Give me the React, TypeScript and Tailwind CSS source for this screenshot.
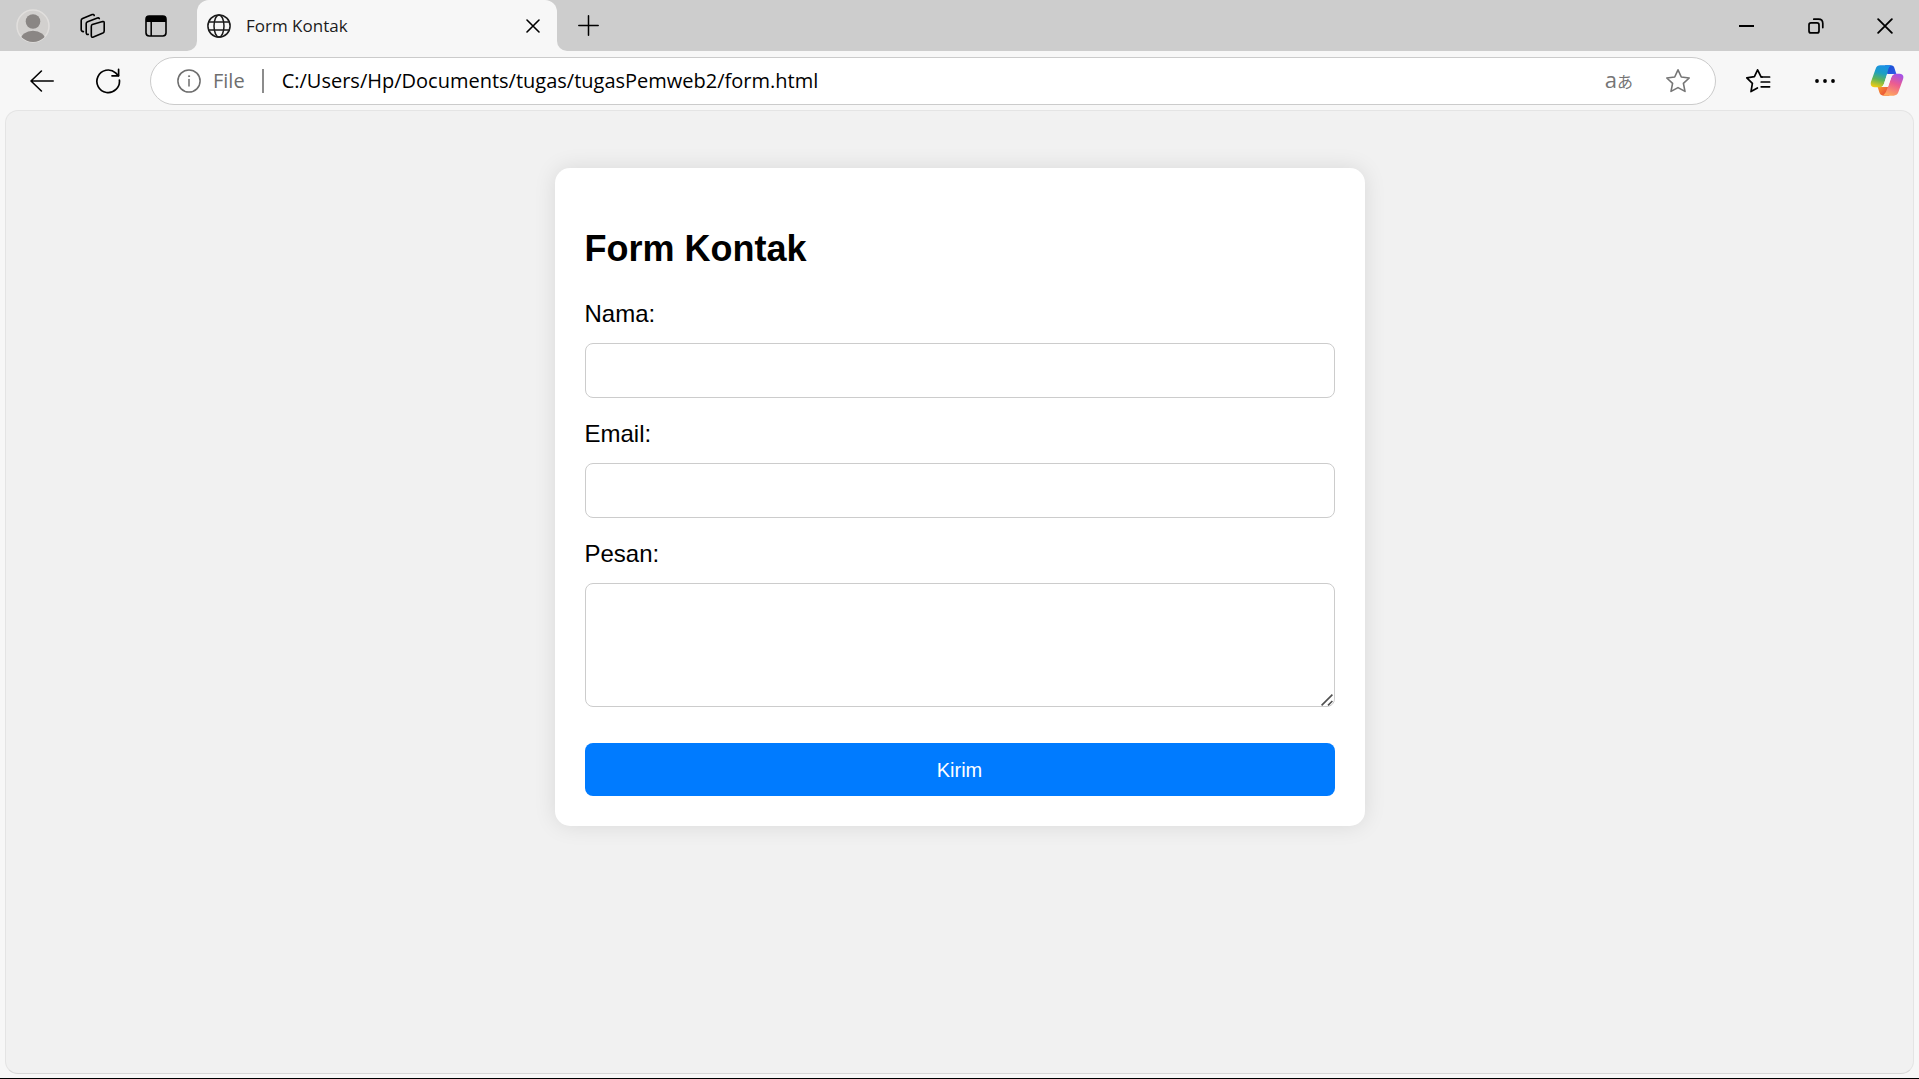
import React from "react";

const ui = "font-['Open_Sans','Noto_Sans',sans-serif]";

const line = {
  fill: "none",
  stroke: "currentColor",
  strokeLinecap: "round" as const,
  strokeLinejoin: "round" as const,
};

function Avatar() {
  return (
    <svg width="34" height="34" viewBox="0 0 34 34" aria-hidden="true">
      <defs>
        <clipPath id="avatar-clip">
          <circle cx="17" cy="17" r="16" />
        </clipPath>
      </defs>
      <circle cx="17" cy="17" r="16" fill="#d2d0ce" stroke="#e1dfdd" strokeWidth="1.5" />
      <g clipPath="url(#avatar-clip)" fill="#8a8684">
        <circle cx="17" cy="12.5" r="7.3" />
        <ellipse cx="17" cy="31.5" rx="12.5" ry="9.8" />
      </g>
    </svg>
  );
}

function WorkspacesIcon() {
  return (
    <svg width="26" height="26" viewBox="0 0 26 26" strokeWidth="1.6" {...line} aria-hidden="true">
      <path d="M12.3 11.6 L22.6 8.6 Q24.2 8.2 24.2 9.8 V18 Q24.2 19.4 22.9 20 L13.4 24 Q11.3 24.7 11.3 22.6 V13.4 Q11.3 12 12.3 11.6 Z" />
      <path d="M8.2 21.4 Q6.2 21.8 6.2 19.6 V10.6 Q6.2 9.2 7.6 8.7 L17.4 5 Q18.8 4.6 19.3 5.6" />
      <path d="M3.4 18.6 Q1.2 18.4 1.2 16.4 V7.6 Q1.2 6.2 2.6 5.6 L12.2 1.6 Q13.8 1.1 14.2 2.4" />
    </svg>
  );
}

function TabActionsIcon() {
  return (
    <svg width="22" height="22" viewBox="0 0 22 22" aria-hidden="true">
      <rect x="1" y="1" width="20" height="20" rx="3.2" fill="none" stroke="#000" strokeWidth="1.6" />
      <path d="M1 7 V4 Q1 1 4 1 H18 Q21 1 21 4 V7 Z" fill="#000" />
      <path d="M6.2 7 V21" stroke="#000" strokeWidth="1.5" />
    </svg>
  );
}

function GlobeIcon() {
  return (
    <svg width="24" height="24" viewBox="0 0 24 24" strokeWidth="1.5" {...line} aria-hidden="true">
      <circle cx="12" cy="12" r="11.1" />
      <ellipse cx="12" cy="12" rx="5" ry="11.1" />
      <path d="M2 8 H22 M2 16 H22" />
    </svg>
  );
}

function CrossIcon({ size }: { size: number }) {
  return (
    <svg width={size} height={size} viewBox="0 0 14 14" strokeWidth="1.6" {...line} aria-hidden="true">
      <path d="M1 1 L13 13 M13 1 L1 13" />
    </svg>
  );
}

function PlusIcon() {
  return (
    <svg width="21" height="21" viewBox="0 0 21 21" strokeWidth="1.5" {...line} aria-hidden="true">
      <path d="M10.5 0.8 V20.2 M0.8 10.5 H20.2" />
    </svg>
  );
}

function RestoreIcon() {
  return (
    <svg width="16" height="16" viewBox="0 0 16 16" strokeWidth="1.7" {...line} aria-hidden="true">
      <rect x="1" y="4.9" width="10" height="10" rx="2" />
      <path d="M5.8 1.2 H10.5 Q14.8 1.2 14.8 5.5 V9.6" />
    </svg>
  );
}

function BackIcon() {
  return (
    <svg width="24" height="22" viewBox="0 0 24 22" strokeWidth="1.6" {...line} aria-hidden="true">
      <path d="M23.2 11 H1 M11.4 1 L1 11 L11.4 21" />
    </svg>
  );
}

function RefreshIcon() {
  return (
    <svg width="26" height="26" viewBox="0 0 26 26" strokeWidth="1.7" {...line} aria-hidden="true">
      <path d="M24.4 12 A11.3 11.3 0 1 1 20.6 4.8 L23.4 7.6" />
      <path d="M23.6 1.4 V7.8 H17" />
    </svg>
  );
}

function InfoIcon() {
  return (
    <svg width="24" height="24" viewBox="0 0 24 24" strokeWidth="1.5" {...line} aria-hidden="true">
      <circle cx="12" cy="12" r="11.1" />
      <path d="M12 10.5 V17" />
      <circle cx="12" cy="7.2" r="0.6" fill="currentColor" strokeWidth="0.8" />
    </svg>
  );
}

function StarIcon() {
  return (
    <svg width="26" height="26" viewBox="0 0 26 26" strokeWidth="1.6" {...line} aria-hidden="true">
      <path d="M13 1.8 L16.3 9 L24.2 10 L18.4 15.4 L20 23.4 L13 19.6 L6 23.4 L7.6 15.4 L1.8 10 L9.7 9 Z" />
    </svg>
  );
}

function FavoritesIcon() {
  return (
    <svg width="26" height="26" viewBox="0 0 26 26" strokeWidth="1.7" {...line} aria-hidden="true">
      <path d="M17 9 L15.8 8.4 L12.6 1.8 L9.4 8.6 L1.8 9.8 L7.4 15.4 L6 23.6 L12.4 20" />
      <path d="M16.2 9 H24.6 M16.2 14 H24.6 M16.2 18.8 H24.6" />
    </svg>
  );
}

function DotsIcon() {
  return (
    <svg width="22" height="6" viewBox="0 0 22 6" aria-hidden="true">
      <circle cx="3" cy="3" r="1.9" />
      <circle cx="11" cy="3" r="1.9" />
      <circle cx="19" cy="3" r="1.9" />
    </svg>
  );
}

function CopilotIcon() {
  return (
    <svg width="34" height="31" viewBox="0 0 102 93" aria-hidden="true">
      <defs>
        <linearGradient id="cp-left" x1="40" y1="0" x2="22" y2="68" gradientUnits="userSpaceOnUse">
          <stop offset="0" stopColor="#1a90e8" />
          <stop offset="0.35" stopColor="#1c9fc4" />
          <stop offset="0.65" stopColor="#5fb458" />
          <stop offset="1" stopColor="#f5cc10" />
        </linearGradient>
        <linearGradient id="cp-top" x1="50" y1="0" x2="76" y2="26" gradientUnits="userSpaceOnUse">
          <stop offset="0" stopColor="#1b4bd0" />
          <stop offset="1" stopColor="#2a5be6" />
        </linearGradient>
        <linearGradient id="cp-right" x1="84" y1="26" x2="58" y2="92" gradientUnits="userSpaceOnUse">
          <stop offset="0" stopColor="#a352e8" />
          <stop offset="0.45" stopColor="#ec5c90" />
          <stop offset="1" stopColor="#ffa95c" />
        </linearGradient>
        <linearGradient id="cp-bottom" x1="22" y1="66" x2="50" y2="90" gradientUnits="userSpaceOnUse">
          <stop offset="0" stopColor="#f99a2e" />
          <stop offset="1" stopColor="#e8483c" />
        </linearGradient>
      </defs>
      <path d="M45 1 H62 Q71 1 74 11 L79 27 H52 Z" fill="url(#cp-top)" />
      <path d="M58 92 H40 Q31 92 28 82 L23 66 H54 Z" fill="url(#cp-bottom)" />
      <path d="M65 1 H31 Q21 1 17 11 L3 50 Q-1 66 14 67 H28 Q38 67 42 56 L53 20 Q56 4 65 1 Z" fill="url(#cp-left)" />
      <path d="M37 92 H71 Q81 92 85 82 L99 43 Q104 27 88 26 H78 Q68 26 64 37 L51 73 Q46 88 37 92 Z" fill="url(#cp-right)" />
      <path d="M52 27 H72 Q66 30 64 37 L54 66 H34 Q40 63 42 56 Z" fill="#f7f7f7" />
    </svg>
  );
}

function TabStrip() {
  return (
    <header className="flex h-[51px] shrink-0 bg-[#f7f7f7]">
      <div className="flex items-center rounded-br-[10px] bg-[#cdcdcd] pr-[30px] pl-4">
        <button aria-label="Profile" className="mr-[30px]"><Avatar /></button>
        <button aria-label="Workspaces" className="mr-[39px]"><WorkspacesIcon /></button>
        <button aria-label="Tab actions"><TabActionsIcon /></button>
      </div>
      <div className="w-[360px] bg-[linear-gradient(#cdcdcd_50%,#f7f7f7_50%)]">
        <div className="flex h-full items-center rounded-t-[12px] bg-[#f7f7f7] pr-[17px] pl-[10px] text-[#1b1b1b]">
          <GlobeIcon />
          <span className={`ml-[15px] flex-1 text-[17px] leading-6 ${ui}`}>Form Kontak</span>
          <button aria-label="Close tab" className="text-black"><CrossIcon size={14} /></button>
        </div>
      </div>
      <div className="flex flex-1 items-center rounded-bl-[10px] bg-[#cdcdcd]">
        <button aria-label="New tab" className="ml-[21px]"><PlusIcon /></button>
        <div className="ml-auto flex h-full">
          <button aria-label="Minimize" className="flex w-[69px] items-center justify-center">
            <span className="h-[2px] w-[15px] bg-black" />
          </button>
          <button aria-label="Restore" className="flex w-[69px] items-center justify-center"><RestoreIcon /></button>
          <button aria-label="Close window" className="flex w-[69px] items-center justify-center"><CrossIcon size={16} /></button>
        </div>
      </div>
    </header>
  );
}

function Toolbar() {
  return (
    <nav className="flex h-[59px] shrink-0 items-center bg-[#f7f7f7] pr-[15px] pl-[30px]">
      <button aria-label="Back"><BackIcon /></button>
      <button aria-label="Refresh" className="ml-[41px]"><RefreshIcon /></button>
      <div className={`ml-[29px] flex h-12 flex-1 items-center rounded-full border border-[#cbcbcb] bg-white pr-[24px] pl-[26px] text-[20px] ${ui}`}>
        <button className="flex items-center gap-3 text-[#6e6e6e]">
          <InfoIcon />
          <span>File</span>
        </button>
        <span className="ml-[17px] h-6 w-[2px] bg-[#8c8c8c]" />
        <input
          aria-label="Address"
          defaultValue="C:/Users/Hp/Documents/tugas/tugasPemweb2/form.html"
          className="ml-[18px] min-w-0 flex-1 bg-transparent text-black outline-none"
        />
        <button aria-label="Translate" className="flex items-baseline font-['Open_Sans','Noto_Sans_CJK_JP',sans-serif] leading-6 text-[#757575]">
          <span className="text-[22px]">a</span>
          <span className="text-[16px]">あ</span>
        </button>
        <button aria-label="Add to favorites" className="ml-[32px] text-[#757575]"><StarIcon /></button>
      </div>
      <button aria-label="Favorites" className="ml-[29px]"><FavoritesIcon /></button>
      <button aria-label="Settings and more" className="ml-[43px]"><DotsIcon /></button>
      <button aria-label="Copilot" className="ml-[34px]"><CopilotIcon /></button>
    </nav>
  );
}

const field = "block w-full rounded-[8px] border border-[#cccccc] bg-white px-4 text-[20px] outline-none";
const label = "mb-[15px] block text-[24px] leading-7";

function ContactForm() {
  return (
    <form
      onSubmit={(e) => e.preventDefault()}
      className="mx-auto mt-[57px] w-full max-w-[810px] rounded-[15px] bg-white px-[30px] pt-[60px] pb-[30px] font-['Liberation_Sans',Arial,sans-serif] text-black shadow-[0_0_22px_rgba(0,0,0,0.1)]"
    >
      <h2 className="mb-[31px] text-[36px] leading-[41px] font-bold">Form Kontak</h2>
      <div className="mb-[22px]">
        <label htmlFor="nama" className={label}>Nama:</label>
        <input id="nama" type="text" className={`h-[55px] ${field}`} />
      </div>
      <div className="mb-[22px]">
        <label htmlFor="email" className={label}>Email:</label>
        <input id="email" type="email" className={`h-[55px] ${field}`} />
      </div>
      <div className="mb-9">
        <label htmlFor="pesan" className={label}>Pesan:</label>
        <div className="relative">
          <textarea id="pesan" className={`h-[124px] resize-none py-3 ${field}`} />
          <svg className="pointer-events-none absolute right-[2px] bottom-[1px]" width="12" height="12" viewBox="0 0 12 12" stroke="#505050" strokeWidth="1.6" aria-hidden="true">
            <path d="M0.6 11.4 L11.4 0.6 M7 11.4 L11.4 7" />
          </svg>
        </div>
      </div>
      <button type="submit" className="block h-[53px] w-full rounded-[8px] bg-[#007bff] text-[20px] leading-6 text-white">
        Kirim
      </button>
    </form>
  );
}

export default function App() {
  return (
    <div className="flex min-h-screen flex-col border-b border-black bg-[#f7f7f7]">
      <TabStrip />
      <Toolbar />
      <main className="mx-[5px] mb-1 flex-1 rounded-[13px] border border-[#e4e4e4] border-b-[#d8d8d8] bg-[#f1f1f1]">
        <ContactForm />
      </main>
    </div>
  );
}
